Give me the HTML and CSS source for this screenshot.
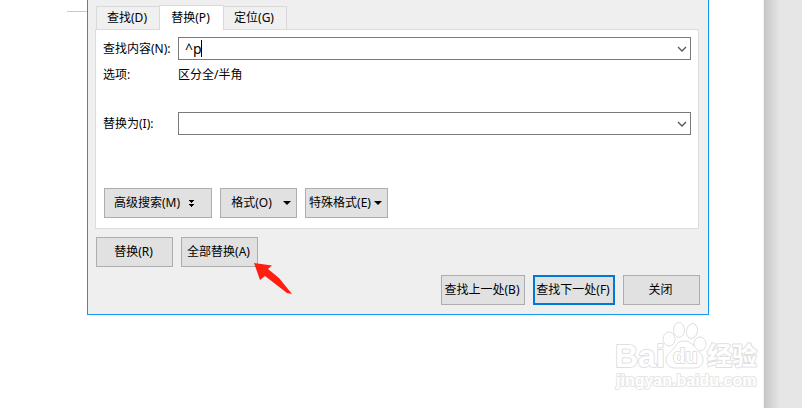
FILE: index.html
```html
<!DOCTYPE html>
<html lang="zh-CN">
<head>
    <meta charset="UTF-8">
    <meta name="viewport" content="width=device-width, initial-scale=1.0">
    <title>查找和替换</title>
    <link rel="stylesheet" href="styles.css">
</head>
<body>
    <main class="page">
        <div class="page-line"></div>
        <form class="dialog">
            <div class="tabs" role="tablist">
                <button type="button" class="tab" role="tab">查找(D)</button>
                <button type="button" class="tab active" role="tab" aria-selected="true">替换(P)</button>
                <button type="button" class="tab" role="tab">定位(G)</button>
            </div>

            <div class="panel">
                <div class="field">
                    <label for="findText">查找内容(N):</label>
                    <div class="combo">
                        <input type="text" id="findText" value="^p">
                        <span class="caret"></span>
                        <button type="button" class="combo-arrow" aria-label="查找记录">
                            <svg width="10" height="6" viewBox="0 0 10 6"><path d="M1 1l4 4 4-4" fill="none" stroke="#555" stroke-width="1.3"/></svg>
                        </button>
                    </div>
                </div>
                <div class="field options">
                    <span>选项:</span>
                    <span>区分全/半角</span>
                </div>
                <div class="field">
                    <label for="replaceText">替换为(I):</label>
                    <div class="combo">
                        <input type="text" id="replaceText">
                        <button type="button" class="combo-arrow" aria-label="替换记录">
                            <svg width="10" height="6" viewBox="0 0 10 6"><path d="M1 1l4 4 4-4" fill="none" stroke="#555" stroke-width="1.3"/></svg>
                        </button>
                    </div>
                </div>
                <div class="buttons more">
                    <button type="button" class="btn advanced">高级搜索(M)
                        <svg width="5" height="7" viewBox="0 0 5 7" shape-rendering="crispEdges"><path d="M0 0h5v1H4v1H3v1H2V2H1V1H0zM0 4h5v1H4v1H3v1H2V6H1V5H0z"/></svg>
                    </button>
                    <button type="button" class="btn format">格式(O)
                        <svg width="8" height="4" viewBox="0 0 8 4"><path d="M0 0h8L4 4z"/></svg>
                    </button>
                    <button type="button" class="btn special">特殊格式(E)
                        <svg width="8" height="4" viewBox="0 0 8 4"><path d="M0 0h8L4 4z"/></svg>
                    </button>
                </div>
            </div>

            <div class="buttons replace">
                <button type="button" class="btn">替换(R)</button>
                <button type="button" class="btn pointed">全部替换(A)
                    <svg class="pointer" width="40" height="34" viewBox="0 0 40 34"><path d="M0 0L18 2.500 14 6 25 15 38 31 33 30 11 13 6 17z" fill="#ff1e10"/></svg>
                </button>
            </div>
            <div class="buttons footer">
                <button type="button" class="btn previous">查找上一处(B)</button>
                <button type="submit" class="btn default">查找下一处(F)</button>
                <button type="button" class="btn">关闭</button>
            </div>
        </form>

        <svg class="watermark" width="152" height="78" viewBox="0 0 152 78">
            <text class="mark-logo" x="5" y="49">Bai</text>
            <g class="paw">
                <ellipse cx="59" cy="21" rx="6" ry="7"/>
                <ellipse cx="69" cy="12" rx="5.500" ry="7.500"/>
                <ellipse cx="82" cy="13" rx="5.500" ry="7.500" transform="rotate(12 82 13)"/>
                <ellipse cx="90" cy="26" rx="6" ry="7"/>
                <path d="M74 23c-6 0-8 4-10 7-3 4-8 6-8 12 0 5 4 8 9 8h19c6 0 9-3 9-8 0-6-4-8-7-12-4-4-6-7-12-7z"/>
            </g>
            <text class="mark-du" x="63" y="45">du</text>
            <text class="mark-cn" x="97" y="47">经验</text>
            <text class="mark-url" x="6" y="68">jingyan.baidu.com</text>
        </svg>
    </main>
    <aside class="backdrop"></aside>
</body>
</html>
```
FILE: styles.css
```css
* {
    box-sizing: border-box;
}
body {
    display: flex;
    min-height: 100vh;
    margin: 0;
    background-color: #fff;
    color: #000;
    font-family: "Noto Sans", "Noto Sans CJK SC", sans-serif;
    font-size: 12px;
    line-height: 16px;
}
button, input {
    font: inherit;
    color: inherit;
}
.page {
    position: relative;
    display: flex;
    align-items: flex-start;
    flex: 1;
    padding: 0 54px 0 67px;
    border-right: 1px solid #f0f0f0;
}
.page-line {
    width: 20px;
    height: 12px;
    border-bottom: 1px solid #c8c8c8;
}
.backdrop {
    width: 38px;
    background: linear-gradient(to right, #c6c6c6, #e6e6e6 16px);
}
.dialog {
    flex: 1;
    padding: 5px 8px 9px 7px;
    border: 1px solid #0f9af0;
    border-top: none;
    background-color: #efefef;
}

/* Tabs */
.tabs {
    display: flex;
    align-items: flex-end;
    padding-left: 1px;
}
.tab {
    width: 64px;
    height: 23px;
    padding: 0 2px 0 0;
    border: 1px solid #d9d9d9;
    border-bottom: none;
    background-color: #f0f0f0;
}
.tab.active {
    position: relative;
    width: 65px;
    height: 25px;
    margin: 0 -1px -1px;
    padding-bottom: 1px;
    background-color: #fff;
}

/* Replace panel */
.panel {
    margin-right: 1px;
    padding: 7px;
    padding-bottom: 10px;
    border: 1px solid #dcdcdc;
    background-color: #fff;
}
.field {
    display: grid;
    grid-template-columns: 75px 1fr;
    align-items: center;
}
.options {
    height: 52px;
    padding-top: 7px;
    align-items: start;
}
.combo {
    position: relative;
    display: flex;
    height: 23px;
    border: 1px solid #7a7a7a;
    background-color: #fff;
}
.combo input {
    flex: 1;
    min-width: 0;
    padding: 0 6px;
    border: none;
    outline: none;
    background: none;
    font-size: 14px;
}
.caret {
    position: absolute;
    left: 22px;
    top: 2px;
    width: 1px;
    height: 17px;
    background-color: #000;
}
.combo-arrow {
    display: flex;
    align-items: center;
    justify-content: center;
    width: 16px;
    padding: 0;
    border: none;
    background: none;
}

/* Buttons */
.buttons {
    display: flex;
    gap: 8px;
    margin-top: 8px;
}
.more {
    margin: 53px 1px 0;
}
.replace {
    padding-left: 1px;
}
.footer {
    justify-content: flex-end;
}
.btn {
    display: flex;
    align-items: center;
    justify-content: center;
    width: 77px;
    height: 30px;
    padding: 0 2px 0 0;
    border: 1px solid #adadad;
    background-color: #e1e1e1;
    white-space: nowrap;
}
.advanced {
    width: 108px;
    gap: 9px;
    padding-right: 8px;
}
.format {
    gap: 11px;
    padding: 0 0 0 5px;
}
.special {
    width: 83px;
    gap: 3px;
}
.previous {
    width: 84px;
}
.default {
    width: 82px;
    border: 2px solid #0078d7;
}
.pointed {
    position: relative;
}
.pointer {
    position: absolute;
    left: 72px;
    top: 25px;
}

/* Watermark */
.watermark {
    position: absolute;
    right: 1px;
    bottom: 12px;
    fill: #fff;
    stroke: #dfdfdf;
    stroke-width: 2px;
    stroke-linejoin: round;
    paint-order: stroke;
    font-family: "Liberation Sans", "Noto Sans CJK SC", sans-serif;
    font-weight: bold;
}
.paw {
    stroke-width: 1px;
    paint-order: normal;
}
.mark-logo {
    font-size: 32px;
}
.mark-du {
    font-size: 20px;
}
.mark-cn {
    font-size: 25px;
}
.mark-url {
    stroke: #e6e6e6;
    font-size: 16px;
}
```
